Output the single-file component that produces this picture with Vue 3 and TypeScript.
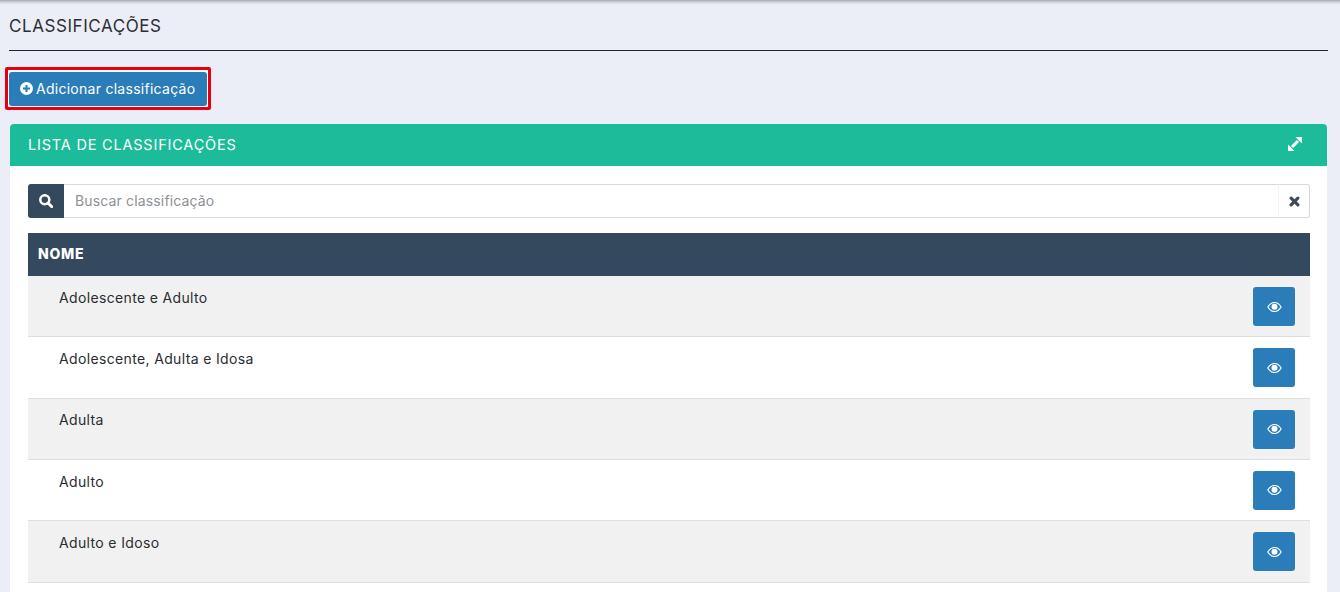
<script setup lang="ts">
const rows: string[] = [
  "Adolescente e Adulto",
  "Adolescente, Adulta e Idosa",
  "Adulta",
  "Adulto",
  "Adulto e Idoso",
];
</script>

<template>
  <div class="page">
    <h1 class="page__title">CLASSIFICAÇÕES</h1>
    <div class="highlight">
      <button class="add-btn" type="button">
        <svg class="add-btn__icon" viewBox="0 0 14 14" aria-hidden="true">
          <circle cx="7" cy="7" r="7" fill="#fff" />
          <path d="M7 3.200v7.600M3.200 7h7.600" stroke="#2a7db8" stroke-width="2.200" />
        </svg>
        Adicionar classificação
      </button>
    </div>

    <section class="card">
      <header class="card__head">
        <span>LISTA DE CLASSIFICAÇÕES</span>
        <svg class="card__expand" viewBox="0 0 14 14" aria-hidden="true">
          <path d="M7.500 0H14v6.500zM0 7.500V14h6.500z" fill="#fff" />
          <path d="M10 4l-6 6" stroke="#fff" stroke-width="3" />
        </svg>
      </header>

      <div class="card__body">
        <div class="search">
          <span class="search__addon">
            <svg viewBox="0 0 14 14" width="14" height="14" aria-hidden="true">
              <circle cx="5.800" cy="5.800" r="4.500" fill="none" stroke="#fff" stroke-width="2.500" />
              <path d="M9 9l3.800 3.800" stroke="#fff" stroke-width="3" stroke-linecap="round" />
            </svg>
          </span>
          <input class="search__input" type="text" placeholder="Buscar classificação" />
          <span class="search__clear">
            <svg viewBox="0 0 12 12" width="11" height="11" aria-hidden="true">
              <path d="M2.300 2.300l7.400 7.400M9.700 2.300l-7.400 7.400" stroke="#3f4a57" stroke-width="3.400" stroke-linecap="round" />
            </svg>
          </span>
        </div>

        <div class="list">
          <div class="list__head">NOME</div>
          <div v-for="(row, i) in rows" :key="row" class="list__row" :class="{ 'list__row--odd': i % 2 === 0 }">
            <span class="list__name">{{ row }}</span>
            <button class="view-btn" type="button" aria-label="Ver">
              <svg viewBox="0 0 16 11" width="15" height="10" aria-hidden="true">
                <path fill-rule="evenodd" d="M8 0c3.400 0 6.200 2.100 8 5.500C14.200 8.900 11.400 11 8 11S1.800 8.900 0 5.500C1.800 2.100 4.600 0 8 0zm0 1.200C5.300 1.200 3 2.900 1.400 5.500 3 8.100 5.300 9.800 8 9.800s5-1.700 6.600-4.300C13 2.900 10.700 1.200 8 1.200z" fill="#fff" />
                <circle cx="8" cy="5.300" r="3.300" fill="#fff" />
              </svg>
            </button>
          </div>
        </div>
      </div>
    </section>
  </div>
</template>

<style>
html,
body {
  margin: 0;
  height: 592px;
  overflow: hidden;
  background: #ebeef7;
}
</style>

<style scoped>
.page {
  display: flex;
  flex-direction: column;
  height: 592px;
  overflow: hidden;
  box-sizing: border-box;
  padding: 0 12px 0 9px;
  background: linear-gradient(#a6a8b0 0, #cfd1d9 2px, #e6e9f2 4px, #ebeef7 6px);
  font-family: Inter, "Open Sans", "Liberation Sans", sans-serif;
  color: #2b2f33;
}

.page__title {
  flex: none;
  margin: 0;
  height: 51px;
  box-sizing: border-box;
  padding-top: 17px;
  border-bottom: 1px solid #23272b;
  font-size: 17px;
  line-height: 19px;
  font-weight: 400;
  letter-spacing: 0.570px;
}

.highlight {
  display: flex;
  flex: none;
  align-self: flex-start;
  margin: 16px 0 0 -4px;
  padding: 2px 1px 1px;
  border: 3px solid #e8000f;
  border-radius: 2px;
  background: #fff;
}

.add-btn {
  display: flex;
  align-items: center;
  gap: 3px;
  width: 198px;
  height: 34px;
  padding: 0 0 2px 11px;
  border: 0;
  border-radius: 3px;
  background: #2a7db8;
  color: #fff;
  font: 400 14px Inter, "Open Sans", sans-serif;
  letter-spacing: 0.270px;
  white-space: nowrap;
}

.add-btn__icon {
  width: 13px;
  height: 13px;
}

.card {
  flex: 1;
  margin: 14px 1px 0;
  background: #fff;
  border-radius: 4px 4px 0 0;
}

.card__head {
  display: flex;
  align-items: center;
  justify-content: space-between;
  height: 42px;
  box-sizing: border-box;
  padding: 0 25px 2px 18px;
  border-radius: 4px 4px 0 0;
  background: #1cbc9a;
  color: #fff;
  font-size: 14.500px;
  letter-spacing: 0.800px;
}

.card__expand {
  width: 14px;
  height: 14px;
}

.card__body {
  padding: 18px 17px 0 18px;
}

.search {
  display: flex;
  height: 34px;
}

.search__addon {
  display: flex;
  align-items: center;
  justify-content: center;
  flex: none;
  width: 36px;
  border-radius: 3px 0 0 3px;
  background: #34495e;
}

.search__input {
  flex: 1;
  min-width: 0;
  box-sizing: border-box;
  padding: 0 11px 2px;
  border: 1px solid #d9d9d9;
  border-left: 0;
  border-right: 0;
  outline: 0;
  color: #333;
  font: 400 14px Inter, "Open Sans", sans-serif;
  letter-spacing: 0.150px;
}

.search__input::placeholder {
  color: #8e9196;
  opacity: 1;
}

.search__clear {
  display: flex;
  align-items: center;
  justify-content: center;
  flex: none;
  width: 32px;
  box-sizing: border-box;
  border: 1px solid #d9d9d9;
  border-left-color: #f2f2f2;
  border-radius: 0 3px 3px 0;
}

.list {
  margin-top: 15px;
}

.list__head {
  height: 43px;
  box-sizing: border-box;
  padding: 0 10px;
  line-height: 42px;
  background: #34495e;
  color: #fff;
  font-size: 14px;
  font-weight: 800;
  letter-spacing: 0.750px;
}

.list__row {
  display: flex;
  align-items: flex-start;
  justify-content: space-between;
  height: 61.330px;
  box-sizing: border-box;
  padding: 11px 15px 0 31px;
  border-bottom: 1px solid #dedede;
  font-size: 14px;
  line-height: 22px;
  letter-spacing: 0.350px;
  color: #2a2d30;
}

.list__row--odd {
  background: #f1f1f1;
}

.list__name {
  margin-top: -0.400px;
}

.view-btn {
  display: flex;
  align-items: center;
  justify-content: center;
  width: 42px;
  height: 39px;
  padding: 0;
  border: 0;
  border-radius: 3px;
  background: #2a7db8;
}
</style>
